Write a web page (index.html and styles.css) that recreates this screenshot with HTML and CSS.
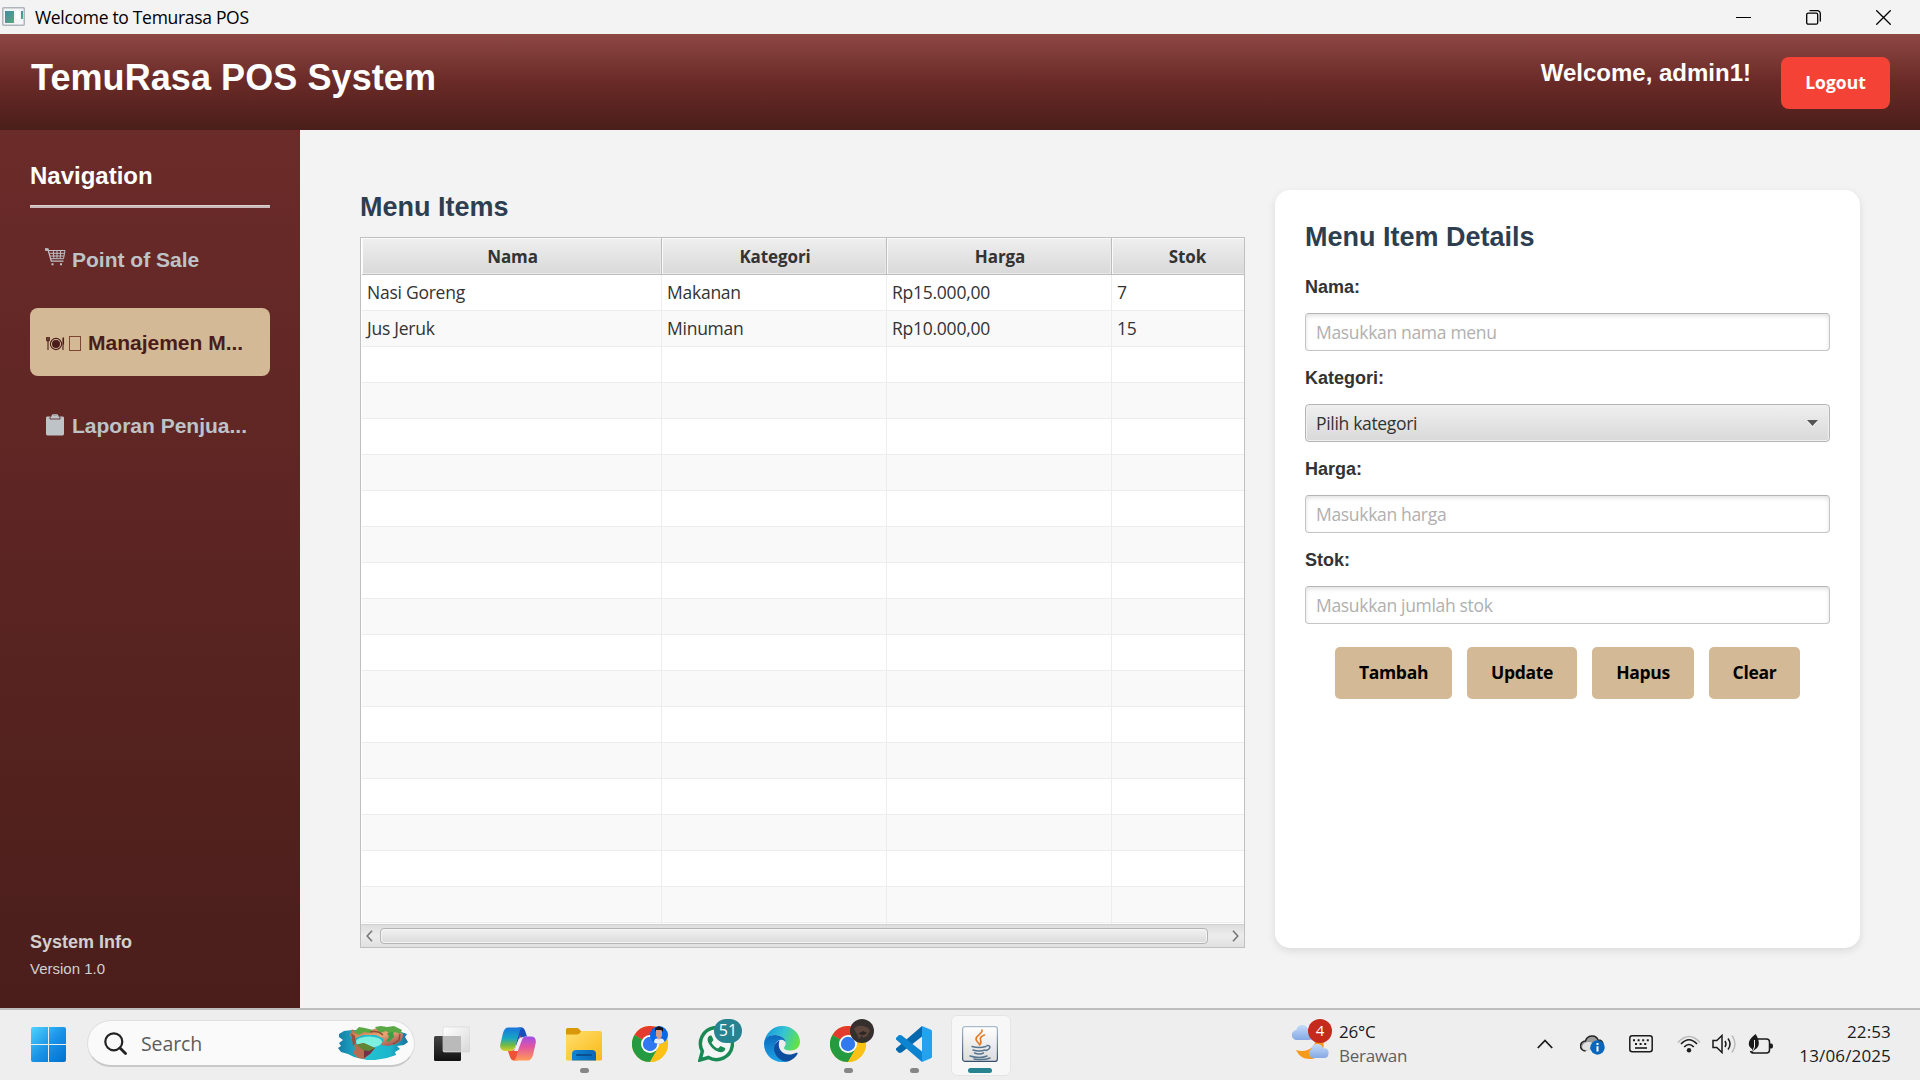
FILE: index.html
```html
<!DOCTYPE html>
<html lang="id">
<head>
<meta charset="utf-8">
<title>Welcome to Temurasa POS</title>
<link rel="stylesheet" href="styles.css">
</head>
<body>
<div class="titlebar">
  <svg class="app-icon" width="23" height="19" viewBox="0 0 23 19"><defs><linearGradient id="ai" x1="0" y1="0" x2="1" y2="1"><stop offset="0" stop-color="#4a86a8"/><stop offset="1" stop-color="#4fae7a"/></linearGradient></defs><rect x=".75" y=".75" width="21.5" height="17.5" rx="1" fill="#f4f5f6" stroke="#b0b5bd" stroke-width="1.5"/><rect x="3" y="4" width="9" height="12" fill="url(#ai)"/><rect x="14" y="4" width="3.5" height="8" fill="#fff"/><rect x="19" y="4" width="2" height="8" fill="url(#ai)"/></svg>
  <span class="window-title">Welcome to Temurasa POS</span>
  <div class="window-buttons">
    <svg width="15" height="15" viewBox="0 0 15 15"><path d="M0 7.5h15" stroke="#000"/></svg>
    <svg width="15" height="15" viewBox="0 0 15 15" fill="none" stroke="#000" stroke-width="1.3"><rect x=".7" y="3.2" width="11" height="11" rx="1.5"/><path d="M3.5 .7h7.8a3 3 0 0 1 3 3v7.8"/></svg>
    <svg width="15" height="15" viewBox="0 0 15 15"><path d="M.3.3l14.4 14.4M14.7.3L.3 14.7" stroke="#000" stroke-width="1.3"/></svg>
  </div>
</div>

<header class="header">
  <h1 class="brand">TemuRasa POS System</h1>
  <div class="account"><span class="welcome">Welcome, admin1!</span><button class="logout">Logout</button></div>
</header>

<div class="body">
  <nav class="sidebar">
    <h2 class="nav-title">Navigation</h2>
    <div class="nav-rule"></div>
    <a class="nav-item">
      <svg class="cart" width="21" height="18" viewBox="0 0 21 18" fill="none" stroke="#bdc3c7"><path d="M0 1.5h3.5" stroke-width="2.6"/><path d="M3 1.5l3.300 11.700h12.200" stroke-width="1.3"/><path d="M4 2.500h16l-1.500 8.200H6M4.800 5.300h14.700M5.400 8h13.500M8.300 2.500l.6 8M12 2.500v8M15.700 2.500l-.5 8" stroke-width="1"/><path d="M6.500 16.300h2M15 16.300h2" stroke-width="2"/></svg>
      <span class="nav-text">Point of Sale</span></a>
    <a class="nav-item active">
      <svg class="plate" width="19" height="15" viewBox="0 0 19 15" fill="none" stroke="#4a1c1a"><circle cx="10" cy="8" r="5.600" stroke-width="1.100"/><circle cx="10" cy="8" r="4" fill="#4a1c1a" stroke="none"/><path d="M.7 1v3.500q1.300 1.500 2.600 0V1M2 1v13M17 1.500v12.500M17.500 1.500v7" stroke-width="1.100"/></svg>
      <span class="missing"></span>
      <span class="nav-text">Manajemen M...</span></a>
    <a class="nav-item">
      <svg class="clip" width="18" height="22" viewBox="0 0 18 22"><rect y="2.500" width="18" height="19" rx="1.400" fill="#bdc3c7"/><path d="M4 5V3.500L6 1h6l2 2.500V5z" fill="#bdc3c7" stroke="#60282a" stroke-width=".9"/><path d="M6 2.200L7 .8h4l1 1.400" fill="none" stroke="#bdc3c7" stroke-width="1.300"/></svg>
      <span class="nav-text">Laporan Penjua...</span></a>
    <div class="system"><div class="system-title">System Info</div><div class="system-version">Version 1.0</div></div>
  </nav>

  <main class="main">
    <section class="list">
      <h2 class="section-title items">Menu Items</h2>
      <div class="table-frame">
        <div class="table-view">
          <table class="grid">
            <colgroup><col class="c-name"><col class="c-mid"><col class="c-mid"><col class="c-last"></colgroup>
            <thead><tr><th>Nama</th><th>Kategori</th><th>Harga</th><th>Stok</th></tr></thead>
            <tbody>
              <tr><td>Nasi Goreng</td><td>Makanan</td><td>Rp15.000,00</td><td>7</td></tr>
              <tr><td>Jus Jeruk</td><td>Minuman</td><td>Rp10.000,00</td><td>15</td></tr>
              <tr><td></td><td></td><td></td><td></td></tr>
              <tr><td></td><td></td><td></td><td></td></tr>
              <tr><td></td><td></td><td></td><td></td></tr>
              <tr><td></td><td></td><td></td><td></td></tr>
              <tr><td></td><td></td><td></td><td></td></tr>
              <tr><td></td><td></td><td></td><td></td></tr>
              <tr><td></td><td></td><td></td><td></td></tr>
              <tr><td></td><td></td><td></td><td></td></tr>
              <tr><td></td><td></td><td></td><td></td></tr>
              <tr><td></td><td></td><td></td><td></td></tr>
              <tr><td></td><td></td><td></td><td></td></tr>
              <tr><td></td><td></td><td></td><td></td></tr>
              <tr><td></td><td></td><td></td><td></td></tr>
              <tr><td></td><td></td><td></td><td></td></tr>
              <tr><td></td><td></td><td></td><td></td></tr>
              <tr><td></td><td></td><td></td><td></td></tr>
              <tr><td></td><td></td><td></td><td></td></tr>
            </tbody>
          </table>
        </div>
        <div class="scrollbar">
          <svg width="7" height="12" viewBox="0 0 7 12"><path d="M6 .8L1.200 6 6 11.200" fill="none" stroke="#777" stroke-width="1.600"/></svg>
          <div class="track"><div class="thumb"></div></div>
          <svg width="7" height="12" viewBox="0 0 7 12"><path d="M1 .8L5.800 6 1 11.200" fill="none" stroke="#777" stroke-width="1.600"/></svg>
        </div>
      </div>
    </section>

    <section class="card">
      <h2 class="section-title details">Menu Item Details</h2>
      <div class="label">Nama:</div>
      <div class="field">Masukkan nama menu</div>
      <div class="label">Kategori:</div>
      <div class="field select">Pilih kategori<svg width="11" height="7" viewBox="0 0 11 7"><path d="M0 1h11L5.500 7z" fill="#fff"/><path d="M0 0h11L5.500 6z" fill="#555"/></svg></div>
      <div class="label">Harga:</div>
      <div class="field">Masukkan harga</div>
      <div class="label">Stok:</div>
      <div class="field">Masukkan jumlah stok</div>
      <div class="actions"><button class="b-tambah">Tambah</button><button class="b-update">Update</button><button class="b-hapus">Hapus</button><button class="b-clear">Clear</button></div>
    </section>
  </main>
</div>

<footer class="taskbar">
  <svg class="start" width="35" height="35" viewBox="0 0 35 35"><defs><linearGradient id="w" gradientUnits="userSpaceOnUse" x1="0" y1="0" x2="35" y2="35"><stop offset="0" stop-color="#4fd3ff"/><stop offset=".5" stop-color="#1a94e6"/><stop offset="1" stop-color="#0070cf"/></linearGradient></defs><g fill="url(#w)"><path d="M2 0h15v17H0V2a2 2 0 0 1 2-2z"/><path d="M18 0h15a2 2 0 0 1 2 2v15H18z"/><path d="M0 18h17v17H2a2 2 0 0 1-2-2z"/><path d="M18 18h17v15a2 2 0 0 1-2 2H18z"/></g></svg>
  <div class="search">
    <svg class="lens" width="23" height="23" viewBox="0 0 23 23" fill="none" stroke="#222"><circle cx="9.800" cy="9.800" r="8.500" stroke-width="2.200"/><path d="M16 16l5.500 5.500" stroke-width="2.800" stroke-linecap="round"/></svg>
    <span class="search-text">Search</span>
    <svg class="island" width="70" height="36" viewBox="0 0 70 36"><defs><linearGradient id="sea"><stop offset="0" stop-color="#157ba6"/><stop offset=".4" stop-color="#20c4d2"/><stop offset=".75" stop-color="#1cb5cb"/><stop offset="1" stop-color="#176f9e"/></linearGradient><linearGradient id="land" x1="0" y1="0" x2="1" y2="1"><stop offset="0" stop-color="#b7643f"/><stop offset=".5" stop-color="#eda674"/><stop offset="1" stop-color="#8e3e4d"/></linearGradient></defs><path d="M1 9l5-3 8-1 46 0 3 2 6 2-2 3 3 5-4 3-7 1 3 3-5 3 1 3-9 3-12 2H29l-13-3-6-3-7-2-3-4 3-2-2-3 4-3-4-3z" fill="url(#sea)"/><path d="M12 10l2-6 3 3 7-2 6 1 9-3 18 0 8 6-1 6-6 4-8 2-7-1 3-6-8-4-13 0-7 3-2 5z" fill="url(#land)"/><path d="M13 8l4 3 1 7-3 3z" fill="#9c5040"/><ellipse cx="31" cy="17" rx="13" ry="5.500" fill="#7ff0df"/><path d="M16 20l9-2 12 5-5 6-6 5-6-1-5-5 2-4z" fill="#b56c50"/><path d="M26 24l11-1-5 6-6 4z" fill="#72334a"/><path d="M19 20l7-2 11 5-6 3-6-1z" fill="#5f8535"/><path d="M16 7l5-5 6 1 8 2-4 3-5-1-5 3zM37 2l6-1 6 1 7-1 8 4-2 4-5-2-4 2-5-3-6 2z" fill="#5aa745"/><path d="M49 8l6-1 1 5-5 5-3-1 3-4z" fill="#3f9c48"/><path d="M62 9l-1 6-6 4M32 7q8-2 13 3" stroke="#8a5039" stroke-width="1.500" fill="none"/></svg>
  </div>
  <div class="apps">
    <div class="app"><svg width="36" height="36" viewBox="0 0 36 36"><defs><linearGradient id="tv" x1="0" y1="0" x2="1" y2="1"><stop offset="0" stop-color="#fff"/><stop offset="1" stop-color="#d8d8d8"/></linearGradient><linearGradient id="tk" x1="0" y1="0" x2="0" y2="1"><stop offset="0" stop-color="#444"/><stop offset="1" stop-color="#111"/></linearGradient></defs><rect x="0" y="10" width="27" height="25" rx="1.500" fill="url(#tk)"/><rect x="9" y="1" width="27" height="25" rx="1.500" fill="url(#tv)" stroke="#d5d5d5" stroke-width=".7"/><path d="M9 10h18v15.500H10.500L9 24z" fill="#bababa"/></svg></div>
    <div class="app"><svg width="36" height="36" viewBox="0 0 36 36"><defs><linearGradient id="c1" x1="0" y1="0" x2="0" y2="1"><stop offset="0" stop-color="#1b74db"/><stop offset=".45" stop-color="#17a6c5"/><stop offset=".75" stop-color="#72b944"/><stop offset="1" stop-color="#d6cf2b"/></linearGradient><linearGradient id="c2" x1="0" y1="0" x2="0" y2="1"><stop offset="0" stop-color="#a04de8"/><stop offset=".45" stop-color="#e4569d"/><stop offset="1" stop-color="#ff9c54"/></linearGradient></defs><path d="M18 1.500h3.500c2 0 3 1.500 4 4.500l1.500 4.500c-4 0-6 .5-7.500 5L15 27z" fill="#1850bb"/><path d="M17 34.500h-3c-2 0-3.500-1.500-4.300-4.500L8 25c5 0 7-1 8.500-5.500L20 9l5 16z" fill="#ef5235"/><path d="M8.500 1.500H24c-3 0-3.800 2-4.700 5L15.500 20c-1.100 3.600-3 5-6 5H5c-4 0-5.500-3-4.600-7L3 7c1-3.500 2.500-5.500 5.500-5.500z" fill="url(#c1)"/><path d="M27.500 34.500H12c3 0 3.800-2 4.700-5L20.500 16c1.100-3.600 3-5.500 6-5.500H31c4 0 5.500 3 4.600 7L33 29c-1 3.500-2.500 5.500-5.500 5.500z" fill="url(#c2)"/><path d="M20.500 11.500h2.300l-5 13.500H14l4.500-11.500z" fill="#f1eef5"/></svg></div>
    <div class="app run"><svg width="36" height="36" viewBox="0 0 36 36"><defs><linearGradient id="fo" x1="0" y1="0" x2="1" y2="1"><stop offset="0" stop-color="#ffdf6e"/><stop offset="1" stop-color="#f9b916"/></linearGradient><linearGradient id="fb" x1="0" x2="1"><stop offset="0" stop-color="#0f86d3"/><stop offset="1" stop-color="#0a66b8"/></linearGradient></defs><path d="M0 3.500Q0 2 1.500 2H11q1 0 2 1l2.500 2.500H34V10H0z" fill="#d9970a"/><path d="M0 8.500h11q1.500 0 2.500-1L15.500 5H34q2 0 2 2v26q0 1.500-1.500 1.500h-33Q0 34.500 0 33z" fill="url(#fo)"/><path d="M6 34.500V28q0-4 4-4h16q4 0 4 4v6.500z" fill="url(#fb)"/><path d="M11 29h14" stroke="#0b4f8e" stroke-width="2" stroke-linecap="round"/></svg></div>
    <div class="app"><svg width="36" height="36" viewBox="0 0 36 36"><g id="chrome"><circle cx="18" cy="18" r="18" fill="#fbc116"/><path d="M18 18L2.400 9A18 18 0 0 1 33.600 9z" fill="#e33b2e"/><path d="M18 18L2.400 9A18 18 0 0 0 18 36L25.800 22.500z" fill="#249a41"/><path d="M18 9H33.600A18 18 0 0 1 18 36L25.800 22.500z" fill="#fbc116"/><circle cx="18" cy="18" r="9" fill="#fff"/><circle cx="18" cy="18" r="7.200" fill="#3079ee"/></g></svg>
      <svg class="avatar near" width="18" height="18" viewBox="0 0 18 18"><defs><clipPath id="av"><circle cx="9" cy="9" r="9"/></clipPath></defs><g clip-path="url(#av)"><path d="M0 0h18v18H0z" fill="#0768e8"/><path d="M3 18l2-5 4-1 4 1 3 5z" fill="#e9eef8"/><path d="M6 4h6v6l-3 4-3-4z" fill="#d49a85"/><path d="M5 6V2l4-2 4 2v4l-2-2H6z" fill="#17151b"/></g></svg></div>
    <div class="app"><svg width="36" height="36" viewBox="0 0 36 36"><path d="M2 34l2.400-8.700A16 16 0 1 1 10.500 31.500z" fill="#f3f6f4" stroke="#1a8a55" stroke-width="3.500"/><path d="M12 9.500c-3.500 2-3 6 .5 10.500s9.500 7.500 13 5.500c2-1.200 2-3 1.500-3.500L22.500 20 20 22.500c-3-1-5.500-3.500-6.500-6l2-2.500-2-4.500z" fill="#1a8a55"/></svg><span class="badge">51</span></div>
    <div class="app"><svg width="36" height="36" viewBox="0 0 36 36"><defs><linearGradient id="e1" x1="0" y1=".3" x2="1" y2=".6"><stop offset="0" stop-color="#1696dd"/><stop offset=".5" stop-color="#35c4d4"/><stop offset="1" stop-color="#65e33e"/></linearGradient><linearGradient id="e2" x1="0" y1="0" x2="0" y2="1"><stop offset="0" stop-color="#0c68bb"/><stop offset="1" stop-color="#1da5e8"/></linearGradient></defs><path d="M0 18C1 7 9 0 18 0c11 0 18 8 18 15.500 0 6-4.500 9-9.500 9-4 0-6.500-1.300-6.500-2.500 0-1 1.700-2 1.700-5C21.700 13 17.500 9 11 9S0 13 0 18z" fill="url(#e1)"/><path d="M0 18C0 12 5 9 11 9c6.500 0 10.700 4 10.700 7.500-.7-1.500-3-3-5-2.700C12 14.500 10 19 11 24c1 6 6 11 13 11.500-2 .5-4 .5-6 .5C8 36 0 28 0 18z" fill="url(#e2)"/><path d="M15.500 14.200C10 17 9 22 11 27c2 5.500 8 9 13 8.500 4-1.200 7.500-4 9.500-7.500.5-1-.3-1.700-1.300-1.200C22 32 12 25 15.500 14.200z" fill="#0d4f9e"/></svg></div>
    <div class="app run"><svg width="36" height="36" viewBox="0 0 36 36"><use href="#chrome"/></svg>
      <svg class="avatar far" width="24" height="24" viewBox="0 0 24 24"><circle cx="12" cy="12" r="12" fill="#35302e"/><path d="M4 10q3-4 9-3t7 5l-3 5-4 2-1-3-3 4-2-5z" fill="#5d463c"/><path d="M8 15l5-3 4 2-3 2z" fill="#2b2422"/></svg></div>
    <div class="app run"><svg width="36" height="36" viewBox="0 0 36 36"><path d="M26 0l9 3.800q1 .5 1 1.700v25q0 1.200-1 1.700L26 36z" fill="#24a2f0"/><path d="M26 0v10.500L5.500 26.500 3 27l-3-3 0-1.500z" fill="#0568ac"/><path d="M0 13.500L0 12l3-3 2.500.3L26 25.500V36z" fill="#0c84cf"/></svg></div>
    <div class="app current"><svg width="36" height="36" viewBox="0 0 36 36"><defs><linearGradient id="jb" x1="0" y1="0" x2="0" y2="1"><stop offset="0" stop-color="#fff"/><stop offset="1" stop-color="#dcdcdc"/></linearGradient><linearGradient id="js" x1="0" y1="0" x2="0" y2="1"><stop offset="0" stop-color="#a9bccb"/><stop offset="1" stop-color="#37506b"/></linearGradient></defs><rect x=".6" y=".6" width="34.800" height="34.800" rx="2.500" fill="url(#jb)" stroke="url(#js)" stroke-width="1.200"/><g fill="none" stroke-linecap="round"><path d="M20 4c1 4-6 5-6 9 0 2 2 3 3 5M22.500 9c-3 1-5 3-4 5s1 3-1 5" stroke="#e8771f" stroke-width="1.600"/><path d="M10 20.500q7 2 14 0M11 24q6 2 12 0M12.500 27q5 1.800 9 0M8 30q10 3 17 0M25 19.500c4-.5 4 3.500-1 5M12 33q10 1.500 16-1" stroke="#587590" stroke-width="1.500"/></g></svg></div>
  </div>
  <div class="weather">
    <svg class="sky" width="37" height="42" viewBox="0 0 37 42"><defs><linearGradient id="cl" x1="0" y1="0" x2="0" y2="1"><stop offset="0" stop-color="#c4dcfb"/><stop offset="1" stop-color="#86a8e4"/></linearGradient></defs><path d="M31 22c3 11-4 19-13 19-7 0-11-3-14-9 9 3 19-1 20-11z" fill="#f59a1b"/><path d="M5 22a5 5 0 0 1-.5-10C5 6 14 5 16 11c5 0 6 4 6 6s-2 5-5 5z" fill="url(#cl)"/><path d="M20 40a5 5 0 0 1-.5-9C20 25 29 24 31 30c5 0 6 3 5.500 6s-2 4-4.500 4z" fill="url(#cl)"/></svg>
    <span class="alert">4</span>
    <div class="weather-text"><span>26°C</span><span class="cond">Berawan</span></div>
  </div>
  <div class="tray">
    <svg width="16" height="10" viewBox="0 0 16 10"><path d="M.8 9L8 1.500 15.200 9" fill="none" stroke="#1b1b1b" stroke-width="1.800"/></svg>
    <svg class="drive" width="25" height="21" viewBox="0 0 25 21"><path d="M5.500 17a5 5 0 0 1 0-10C7 1 16 0 18 6c3 0 5 2 5 5" fill="#9b9b9b" stroke="#252525" stroke-width="1.500"/><path d="M2 12.500c2-4.500 6-5.500 11-3.500l-4 7H5.500q-3 0-3.500-3.500z" fill="#e1e1e1"/><circle cx="17.500" cy="13.500" r="7.200" fill="#0867bd"/><path d="M17.500 9v2M17.500 12.300v5.200" stroke="#fff" stroke-width="2"/></svg>
    <svg class="keys" width="24" height="18" viewBox="0 0 24 18"><rect x=".8" y=".8" width="22.400" height="16" rx="2.500" fill="none" stroke="#1b1b1b" stroke-width="1.500"/><path d="M4 5.300h16M6 9h12" stroke="#1b1b1b" stroke-width="2" stroke-dasharray="2 2.600"/><path d="M6 13h12" stroke="#1b1b1b" stroke-width="1.600"/></svg>
    <svg class="wifi" width="24" height="18" viewBox="0 0 24 18" fill="none" stroke="#1b1b1b" stroke-width="1.700"><path d="M1 7.500Q12-4.500 23 7.500" stroke="#bbb"/><path d="M4 9Q12 .5 20 9M7.200 12q4.800-5 9.600 0"/><circle cx="12" cy="15.300" r="2.200" fill="#1b1b1b" stroke="none"/></svg>
    <svg class="sound" width="25" height="20" viewBox="0 0 25 20" fill="none" stroke="#1b1b1b" stroke-width="1.500"><path d="M1 6.500h3.800L10 1.500v17l-5.200-5H1z"/><path d="M13 7q2 3 0 6M16 4.500q4 5.500 0 11"/><path d="M20 1.500q6 8.500 0 17" stroke="#bbb"/></svg>
    <svg class="power" width="25" height="21" viewBox="0 0 25 21"><path d="M9 5h9.500q3 0 3 3v8q0 3-3 3H6q-3 0-3.500-2" fill="none" stroke="#1b1b1b" stroke-width="1.500"/><path d="M22 9.500h1.500q1.500 0 1.500 2.500t-1.500 2.500H22z" fill="#1b1b1b"/><path d="M7.500 0c3.500 5 5.500 12-.5 15.500L4 18l0-3C-2 11 1 5 7.500 0z" fill="#1b1b1b"/><path d="M6.500 6v7l-2 4" stroke="#eee" fill="none"/></svg>
    <div class="clock"><span>22:53</span><span>13/06/2025</span></div>
  </div>
</footer>
</body>
</html>
```
FILE: styles.css
```css
* { box-sizing: border-box; }
body {
  margin: 0;
  width: 1920px;
  height: 1080px;
  overflow: hidden;
  display: flex;
  flex-direction: column;
  background: #f3f3f3;
  color: #333;
  font-family: "Open Sans", "Noto Sans", sans-serif;
  font-size: 17.5px;
}
h1, h2 { margin: 0; }
svg { display: block; flex: none; }
button { border: 0; padding: 0; font-family: inherit; }

.titlebar { height: 34px; display: flex; align-items: center; padding: 0 29px 0 2px; color: #000; }
.app-icon { margin-top: -1px; }
.window-title { margin-left: 10px; line-height: 34px; letter-spacing: -.31px; }
.window-buttons { margin-left: auto; display: flex; gap: 55px; }

.header {
  height: 96px;
  display: flex;
  justify-content: space-between;
  align-items: flex-start;
  padding: 23px 30px 0 31px;
  background: linear-gradient(#8d4844, #6a2a27 50%, #4a1e1a);
  color: #fff;
  font-family: "Liberation Sans", sans-serif;
}
.brand { font-size: 36px; line-height: 41px; letter-spacing: .08px; }
.account { display: flex; gap: 30px; }
.welcome { font-size: 24px; font-weight: bold; line-height: 31px; }
.logout { width: 109px; height: 52px; border-radius: 8px; background: #f44336; color: #fff; font: bold 17.5px/50px "Open Sans", sans-serif; padding-bottom: 2px; }

.body { flex: 1; display: flex; min-height: 0; }
.sidebar {
  width: 300px;
  display: flex;
  flex-direction: column;
  padding: 30px 30px 25px;
  background: linear-gradient(#6b2b29, #4a1e1b);
  color: #bdc3c7;
  font-family: "Liberation Sans", sans-serif;
}
.nav-title { color: #fff; font-size: 24px; line-height: 32px; }
.nav-rule { height: 3px; margin: 13px 0 17px; background: #c9b9b8; border-top: 1px solid #dcd2d2; }
.nav-item { height: 68px; margin-bottom: 15px; padding: 0 15px; border-radius: 8px; display: flex; align-items: center; font-size: 21px; font-weight: bold; line-height: 68px; white-space: nowrap; }
.nav-item.active { background: #d4b996; color: #4a1c1a; padding-left: 16px; }
.cart { margin-top: -5px; }
.clip { margin: 0 2px 0 1px; }
.plate { margin-top: 2px; }
.nav-text { margin-left: 6px; padding-top: 2px; }
.active .nav-text { margin-left: 7px; }
.missing { width: 12px; height: 15px; margin: 2px 0 0 4px; border: 1px solid #7d4632; }
.system { margin-top: auto; color: #d3d0cf; }
.system-title { font-size: 18px; font-weight: bold; line-height: 26px; }
.system-version { font-size: 15px; line-height: 28px; }

.main { flex: 1; display: flex; gap: 30px; padding: 60px; }
.list { width: 885px; display: flex; flex-direction: column; }
.section-title { font: bold 27px/34px "Liberation Sans", sans-serif; color: #2c3e50; }
.items { height: 47px; }
.table-frame { flex: 1; border: 1px solid #c0c0c0; display: flex; flex-direction: column; min-height: 0; background: #fff; }
.table-view { flex: 1; overflow: hidden; min-height: 0; padding: 0 1px; }
.grid { width: 900px; border-collapse: separate; border-spacing: 0; table-layout: fixed; }
.c-name { width: 300px; }
.c-mid { width: 225px; }
.c-last { width: 150px; }
.grid th { height: 37px; padding: 2px 0 0 2px; background: linear-gradient(#efefef, #d9d9d9); border-right: 1px solid #bdbdbd; border-bottom: 1px solid #bdbdbd; box-shadow: inset 1px 1px #fafafa, inset -1px -1px #e9e9e9; font-weight: bold; font-size: 17px; line-height: 34px; letter-spacing: -.1px; }
.grid td { height: 36px; padding: 0 5px 1px; border-right: 1px solid #ededed; border-bottom: 1px solid #ededed; line-height: 33px; letter-spacing: -.25px; }
.grid tr:nth-child(even) td { background: #f9f9f9; }
.scrollbar { height: 23px; display: flex; align-items: center; justify-content: space-between; padding: 0 5px; border-top: 1px solid #d0d0d0; background: linear-gradient(#dedede, #ececec 50%, #e0e0e0); }
.track { flex: 1; padding: 0 24px 0 7px; }
.thumb { height: 16px; border: 1px solid #b4b4b4; border-radius: 4px; background: linear-gradient(#f2f2f2, #dadada); box-shadow: inset 0 0 0 1px #f4f4f4; }

.card { width: 585px; padding: 30px; border-radius: 15px; background: #fff; box-shadow: 0 3px 8px rgba(0, 0, 0, .1); display: flex; flex-direction: column; }
.details { height: 48px; }
.label { font: bold 18px/38px "Liberation Sans", sans-serif; height: 45px; }
.field { height: 38px; margin-bottom: 8px; padding: 0 11px 0 10px; border: 1px solid #c5c5c5; border-top-color: #b5b5b5; border-radius: 4px; display: flex; align-items: center; justify-content: space-between; color: #b0b0b0; box-shadow: inset 0 2px 4px rgba(0, 0, 0, .12); line-height: 36px; letter-spacing: -.32px; }
.select { color: #333; border-color: #b5b5b5; background: linear-gradient(#efefef, #d9d9d9); box-shadow: inset 0 0 0 1px #f0f0f0; }
.actions { display: flex; justify-content: center; gap: 15px; margin-top: 15px; }
.actions button { height: 52px; padding-bottom: 2px; border-radius: 5px; background: #d4b996; color: #000; font: bold 17.5px/50px "Open Sans", sans-serif; letter-spacing: -.3px; }
.b-tambah { width: 117px; }
.b-update { width: 110px; }
.b-hapus { width: 102px; }
.b-clear { width: 91px; }

.taskbar { height: 72px; border-top: 2px solid #bdbdbd; background: #eee; display: flex; align-items: center; color: #1b1b1b; padding-left: 31px; }
.start { margin-top: -1px; }
.search { width: 328px; height: 47px; margin: -3px 0 0 21px; padding: 0 6px 0 16px; border-radius: 24px; background: #fafafa; border: 1px solid #dedede; border-bottom: 2px solid #c8c8c8; display: flex; align-items: center; }
.search-text { margin-left: 14px; padding-top: 1px; color: #5c5c5c; font-size: 19.5px; letter-spacing: -.1px; }
.island { margin-left: auto; }
.apps { display: flex; height: 70px; margin-left: 4px; }
.app { width: 66px; padding-top: 16px; display: flex; justify-content: center; position: relative; }
.app.run::after, .app.current::after { content: ""; position: absolute; bottom: 7px; width: 9px; height: 5px; border-radius: 3px; background: #868686; }
.app.current::after { width: 24px; background: #27838f; }
.app.current::before { content: ""; position: absolute; top: 5px; left: 4px; width: 58px; height: 59px; border-radius: 6px; background: #f7f7f7; border: 1px solid #e4e4e4; }
.app.current svg { position: relative; }
.avatar { position: absolute; }
.near { top: 16px; left: 33px; }
.far { top: 9px; left: 35px; }
.badge { position: absolute; top: 9px; left: 31px; width: 28px; height: 24px; border-radius: 12px; background: #27838f; color: #fff; font-size: 16px; line-height: 23px; text-align: center; }
.weather { display: flex; margin-left: 279px; position: relative; gap: 10px; align-items: center; }
.sky { margin-top: -12px; }
.alert { position: absolute; left: 16px; top: -3px; width: 24px; height: 24px; border-radius: 12px; background: #c42b1c; color: #fff; font-size: 15px; line-height: 23px; text-align: center; }
.weather-text, .clock { display: flex; flex-direction: column; margin-top: -2px; font-size: 17px; line-height: 24px; letter-spacing: -.25px; }
.cond { color: #5f5f5f; }
.tray { margin-left: auto; display: flex; align-items: center; padding-right: 29px; }
.tray svg { margin-top: -2px; }
.tray .drive { margin-left: 27px; }
.tray .keys { margin-left: 24px; }
.tray .wifi { margin-left: 24px; }
.tray .sound { margin-left: 11px; }
.tray .power { margin-left: 11px; }
.clock { margin-left: 26px; width: 92px; text-align: right; letter-spacing: .15px; }
```
